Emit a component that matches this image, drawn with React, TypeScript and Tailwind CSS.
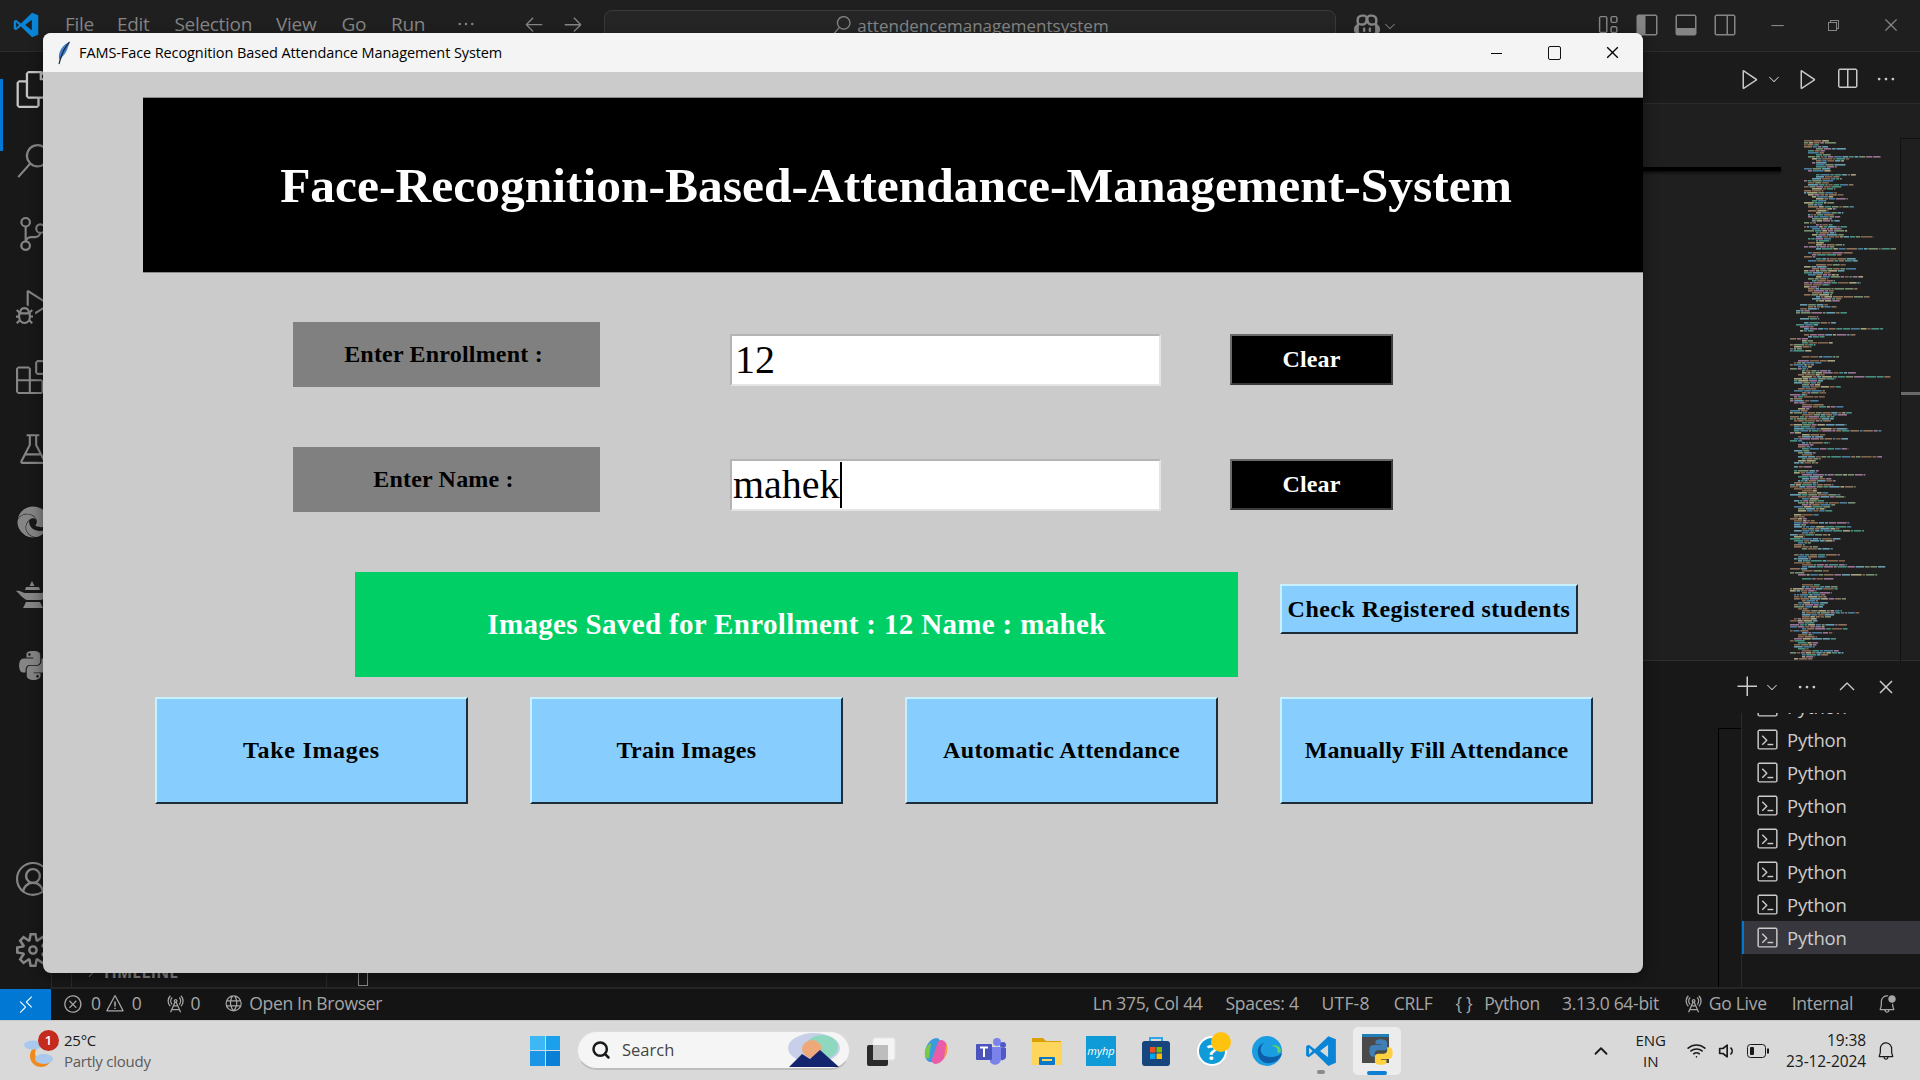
import React from "react";
import {
  VscFiles, VscSearch, VscSourceControl, VscDebugAlt, VscExtensions, VscBeaker, VscAccount, VscSettingsGear,
  VscPlay, VscSplitHorizontal, VscEllipsis, VscAdd, VscChevronDown, VscChevronUp, VscClose, VscTerminal,
  VscLayoutSidebarLeft, VscLayoutPanel, VscLayoutSidebarRightOff, VscLayout, VscRemote, VscError, VscWarning,
  VscRadioTower, VscGlobe, VscBellDot, VscArrowLeft, VscArrowRight, VscChromeMinimize, VscChromeRestore,
  VscChromeClose, VscCopilot, VscChevronRight, VscBell,
} from "react-icons/vsc";
import { FaEdge, FaPython } from "react-icons/fa";
import { FiSearch, FiWifi, FiVolume1, FiChevronUp } from "react-icons/fi";

const VsLogo = ({ size, className }: { size: number; className?: string }) => (
  <svg width={size} height={size} viewBox="0 0 24 24" className={className}>
    <path fill="currentColor" fillRule="evenodd" d="M17.2 1.5 7.6 10.7 3.4 7.6 1.5 8.6v6.8l1.9 1 4.2-3.1 9.6 9.2 5.3-2.2V3.7zM17 7.6v8.8L11.3 12zM3.6 9.6 6 12l-2.4 2.4z" />
  </svg>
);

const Lamp = () => (
  <svg width="36" height="30" viewBox="0 0 36 30">
    <path fill="currentColor" d="M17 2l2.500 5h-5zM11 8h13l1 3H10zM1 12c4-1 6 2 9 2h16c4 0 6-4 9-4-1 5-4 9-9 11H12C8 20 5 15 1 12zM11 23h14l3 6H8z" />
  </svg>
);

function minimap() {
  const palette = ["#4f86a8", "#9a7a5f", "#7d9a78", "#a67ca0", "#6fa8c0", "#b4b08a", "#4c9a8a", "#8a6a52"];
  const rects: React.ReactElement[] = [];
  let seed = 1337;
  const rnd = () => {
    seed = (seed * 16807) % 2147483647;
    return seed / 2147483647;
  };
  for (let y = 0; y < 522; y += 2) {
    if (rnd() < 0.07) continue;
    const base = y < 165 ? 20 : y < 200 ? 12 : 6;
    const indent = base + Math.floor(rnd() * 4) * 4;
    let x = indent;
    const r = rnd();
    const long = r < 0.14 ? 80 : r < 0.55 ? 48 : 22;
    const end = Math.min(112, x + 10 + rnd() * long);
    while (x < end) {
      const w = 2 + rnd() * 9;
      rects.push(<rect key={`${y}-${x}`} x={x} y={y} width={Math.min(w, end - x)} height={1.6} fill={palette[Math.floor(rnd() * palette.length)]} opacity={0.9} />);
      x += w + 0.8;
    }
  }
  return rects;
}

const Feather = () => (
  <svg width="14" height="24" viewBox="0 0 14 24">
    <path d="M12.5 1C7 3 3 8 2 14c-.4 2.500 0 4 1 5.500L5 16c3-2 6-8 7.500-15z" fill="#3f7ec8" />
    <path d="M12.500 1C8 6 5 12 3 19.500L2 23" stroke="#1d2a40" strokeWidth="1.2" fill="none" />
  </svg>
);

const PyColor = ({ size }: { size: number }) => (
  <svg width={size} height={size} viewBox="0 0 24 24">
    <path fill="#3f7fb5" d="M11.900 1C7 1 7.300 3.100 7.300 3.100v2.300h4.700v.7H5.400S2 5.700 2 11s2.900 5 2.900 5h1.800v-2.500s-.1-2.900 2.900-2.900h4.800s2.800 0 2.800-2.700V3.700S17 1 11.900 1z" />
    <path fill="#fdd140" d="M12.100 23c4.900 0 4.600-2.100 4.600-2.100v-2.300H12v-.7h6.600S22 18.300 22 13s-2.900-5-2.900-5h-1.800v2.500s.1 2.900-2.900 2.900H9.600s-2.800 0-2.800 2.700v4.200S7 23 12.100 23z" />
  </svg>
);

const StatusText = ({ children, className }: { children: React.ReactNode; className?: string }) => (
  <span className={`text-[17.5px] leading-none whitespace-nowrap tracking-[-0.3px] ${className ?? ""}`}>{children}</span>
);

const ActIcon = ({ children }: { children: React.ReactNode }) => (
  <div className="flex items-center justify-center text-[#858585] h-[36px]">{children}</div>
);

const TkButton = ({ label, tracking }: { label: string; tracking: string }) => (
  <div className={`w-[313px] h-[107px] bg-[#87ceff] border-2 border-t-[#c8f0ff] border-l-[#c8f0ff] border-r-[#1f2d38] border-b-[#1f2d38] flex items-center justify-center font-bold text-[24px] text-black pb-[2px] ${tracking}`}>
    {label}
  </div>
);

const Row = ({ label, value, caret, mt }: { label: string; value: string; caret?: boolean; mt: string }) => (
  <div className={`flex items-start ml-[250px] ${mt}`}>
    <div className="w-[307px] h-[65px] bg-[#808080] flex items-center justify-center font-bold text-[24px] tracking-[0.2px] text-black pb-[1px] pr-[6px]">{label}</div>
    <div className="ml-[130px] mt-[12px] w-[431px] h-[52px] bg-white border-2 border-t-[#b4b4b4] border-l-[#b4b4b4] border-r-[#e4e4e4] border-b-[#e4e4e4] flex items-center text-[40px] leading-none text-black">
      <span className={caret ? "ml-[1px]" : "ml-[3px]"}>{value}</span>
      {caret && <span className="w-[2px] h-[46px] bg-black" />}
    </div>
    <div className="ml-[69px] mt-[12px] w-[163px] h-[51px] bg-black border-2 border-t-[#6b6b6b] border-l-[#6b6b6b] border-r-[#3a3a3a] border-b-[#3a3a3a] flex items-center justify-center font-bold text-[24px] tracking-[0.1px] text-white pb-[2px]">Clear</div>
  </div>
);

export default function App() {
  return (
    <div className="relative w-[1920px] h-[1080px] overflow-hidden flex flex-col bg-[#1f1f1f] font-['Open_Sans','Noto_Sans',sans-serif]">
      {/* VS Code title bar */}
      <div className="h-[52px] shrink-0 flex items-start bg-[#1f1f1f] border-b border-[#2b2b2b] text-[#858585]">
        <VsLogo size={28} className="text-[#0a84d6] ml-[12px] mt-[11px]" />
        <div className="flex items-center h-[48px] text-[19px] ml-[25px] tracking-[-0.3px]">
          <span>File</span>
          <span className="ml-[23px]">Edit</span>
          <span className="ml-[25px]">Selection</span>
          <span className="ml-[24px]">View</span>
          <span className="ml-[25px]">Go</span>
          <span className="ml-[25px]">Run</span>
          <VscEllipsis size={20} className="ml-[31px]" />
          <VscArrowLeft size={22} className="ml-[47px]" />
          <VscArrowRight size={22} className="ml-[17px]" />
        </div>
        <div className="absolute left-[604px] top-[10px] w-[732px] h-[38px] rounded-[8px] border border-[#3a3a3a] bg-[#252525] flex items-start justify-center pt-[2px] text-[17px]">
          <VscSearch size={20} className="mt-[3px] mr-[6px]" />
          <span>attendencemanagementsystem</span>
        </div>
        <div className="flex-1" />
        <VscCopilot size={26} className="mt-[12px]" />
        <VscChevronDown size={16} className="ml-[2px] mt-[18px]" />
        <VscLayout size={23} className="ml-[198px] mt-[13px]" />
        <VscLayoutSidebarLeft size={24} className="ml-[16px] mt-[13px]" />
        <VscLayoutPanel size={24} className="ml-[15px] mt-[13px]" />
        <VscLayoutSidebarRightOff size={24} className="ml-[15px] mt-[13px]" />
        <VscChromeMinimize size={18} className="ml-[31px] mt-[16px]" />
        <VscChromeRestore size={16} className="ml-[39px] mt-[17px]" />
        <VscChromeClose size={18} className="ml-[41px] mt-[16px] mr-[20px]" />
      </div>

      {/* Main */}
      <div className="flex-1 flex min-h-0">
        {/* Activity bar */}
        <div className="w-[52px] shrink-0 bg-[#181818] flex flex-col relative border-r border-[#2b2b2b]">
          <div className="absolute left-0 top-[27px] w-[3px] h-[72px] bg-[#0078d4]" />
          <div className="flex flex-col items-center pl-[10px] w-[56px] pt-[19px] h-full">
            <ActIcon><VscFiles size={37} className="text-[#c4c4c4]" /></ActIcon>
            <div className="h-[36px]" />
            <ActIcon><VscSearch size={34} /></ActIcon>
            <div className="h-[37px]" />
            <ActIcon><VscSourceControl size={34} /></ActIcon>
            <div className="h-[37px]" />
            <ActIcon><VscDebugAlt size={34} /></ActIcon>
            <div className="h-[34px]" />
            <ActIcon><VscExtensions size={34} /></ActIcon>
            <div className="h-[36px]" />
            <ActIcon><VscBeaker size={34} /></ActIcon>
            <div className="h-[37px]" />
            <ActIcon><FaEdge size={32} /></ActIcon>
            <div className="h-[36px]" />
            <ActIcon><Lamp /></ActIcon>
            <div className="h-[35px]" />
            <ActIcon><FaPython size={33} /></ActIcon>
            <div className="h-[178px]" />
            <ActIcon><VscAccount size={34} /></ActIcon>
            <div className="h-[35px]" />
            <ActIcon><VscSettingsGear size={34} /></ActIcon>
          </div>
        </div>

        {/* Editor and panel */}
        <div className="flex-1 flex flex-col min-w-0">
          <div className="h-[52px] shrink-0 bg-[#1b1b1b] border-b border-[#2b2b2b] flex items-center justify-end text-[#c8c8c8] pt-[2px]">
            <VscPlay size={24} />
            <VscChevronDown size={16} className="ml-[4px]" />
            <VscPlay size={24} className="ml-[14px]" />
            <VscSplitHorizontal size={24} className="ml-[15px]" />
            <VscEllipsis size={22} className="ml-[16px] mr-[23px]" />
          </div>
          <div className="h-[557px] shrink-0 flex relative border-b border-[#2f2f2f]">
            <div className="flex-1 relative">
              <div className="absolute top-[63px] right-[3px] w-[220px] h-[4px] bg-black shadow-[0_2px_3px_rgba(0,0,0,0.6)]" />
            </div>
            <div className="w-[116px] shrink-0 pt-[34px]">
              <svg width="116" height="522" viewBox="0 0 116 522">{minimap()}</svg>
            </div>
            <div className="w-[20px] shrink-0 mt-[34px] border-l border-t border-[#111111] relative h-[523px]">
              <div className="absolute top-[253px] left-0 w-full h-[3px] bg-[#6a6a6a]" />
            </div>
          </div>
          <div className="flex-1 flex flex-col bg-[#181818] min-h-0">
            <div className="h-[52px] shrink-0 flex items-center justify-end text-[#cccccc]">
              <VscAdd size={24} />
              <VscChevronDown size={16} className="ml-[4px]" />
              <VscEllipsis size={22} className="ml-[16px]" />
              <VscChevronUp size={24} className="ml-[17px]" />
              <VscClose size={24} className="ml-[15px] mr-[22px]" />
            </div>
            <div className="flex-1 flex min-h-0">
              <div className="flex-1 relative">
                <div className="absolute left-[31px] top-[251px] text-[#8a8a8a] font-bold text-[16px] leading-none tracking-[0.2px]">
                  <span className="inline-flex items-center"><VscChevronRight size={16} className="mr-[3px]" />TIMELINE</span>
                </div>
                <div className="absolute left-[19px] top-[250px] bottom-0 w-px bg-[#2a2a2a]" />
                <div className="absolute left-[274px] top-[250px] bottom-0 w-px bg-[#2a2a2a]" />
                <div className="absolute left-[306px] top-[256px] w-[10px] h-[17px] border border-[#8a8a8a]" />
                <div className="absolute right-[22px] top-[15px] bottom-0 w-0 border-l border-black" />
                <div className="absolute right-0 top-[15px] w-[22px] h-0 border-t border-black" />
              </div>
              <div className="w-[179px] shrink-0 border-l border-[#2b2b2b] overflow-hidden text-[#cccccc]">
                <div className="mt-[-23px]">
                  {[0, 1, 2, 3, 4, 5, 6, 7].map((i) => (
                    <div key={i} className={`h-[33px] flex items-center text-[18.5px] tracking-[-0.2px] ${i === 7 ? "bg-[#37373d] border-l-[2px] border-[#0078d4] pl-[12px]" : "pl-[14px]"}`}>
                      <VscTerminal size={23} className="mr-[8px]" />
                      <span>Python</span>
                    </div>
                  ))}
                </div>
              </div>
            </div>
            <div className="h-[2px] bg-[#262626] shrink-0" />
          </div>
        </div>
      </div>

      {/* Status bar */}
      <div className="h-[31px] shrink-0 bg-[#141414] flex items-center text-[#a6a6a6] pb-[2px]">
        <div className="w-[51px] h-[31px] mb-[-2px] bg-[#0078d4] flex items-center justify-center text-white"><VscRemote size={20} /></div>
        <VscError size={20} className="ml-[12px]" />
        <StatusText className="ml-[8px]">0</StatusText>
        <VscWarning size={20} className="ml-[4px]" />
        <StatusText className="ml-[7px]">0</StatusText>
        <VscRadioTower size={20} className="ml-[24px]" />
        <StatusText className="ml-[5px]">0</StatusText>
        <VscGlobe size={20} className="ml-[23px]" />
        <StatusText className="ml-[6px]">Open In Browser</StatusText>
        <div className="flex-1" />
        <StatusText>Ln 375, Col 44</StatusText>
        <StatusText className="ml-[23px]">Spaces: 4</StatusText>
        <StatusText className="ml-[23px] tracking-[0.2px]">UTF-8</StatusText>
        <StatusText className="ml-[24px]">CRLF</StatusText>
        <StatusText className="ml-[23px]">{"{ }"}</StatusText>
        <StatusText className="ml-[12px]">Python</StatusText>
        <StatusText className="ml-[22px]">3.13.0 64-bit</StatusText>
        <VscRadioTower size={20} className="ml-[24px]" />
        <StatusText className="ml-[6px]">Go Live</StatusText>
        <StatusText className="ml-[25px]">Internal</StatusText>
        <VscBellDot size={20} className="ml-[24px] mr-[23px]" />
      </div>

      {/* Taskbar */}
      <div className="h-[60px] shrink-0 bg-[#d9d9d9] border-t border-[#c8c8c8] flex items-center text-[#1a1a1a] relative">
        <div className="relative w-[38px] h-[38px] ml-[22px]">
          <svg width="38" height="38" viewBox="0 0 38 38">
            <circle cx="19" cy="24" r="11" fill="#f08a1d" />
            <circle cx="23" cy="21" r="10" fill="#d9d9d9" />
            <ellipse cx="22" cy="27" rx="9" ry="5" fill="#a9c8ee" />
            <ellipse cx="11" cy="13" rx="9" ry="4.500" fill="#a9c8ee" />
          </svg>
          <span className="absolute left-[16px] top-[-2px] w-[21px] h-[21px] rounded-full bg-[#c42b1c] text-white text-[13px] font-semibold flex items-center justify-center leading-none">1</span>
        </div>
        <div className="ml-[4px] flex flex-col text-[15px] leading-[21px] tracking-[-0.25px] w-[106px]">
          <span>25°C</span>
          <span className="text-[#5a5a5a]">Partly cloudy</span>
        </div>
        <div className="ml-[360px] grid grid-cols-2 gap-[1px] w-[30px] h-[30px]">
          <span className="bg-[#3db8f5]" /><span className="bg-[#1ba1ec]" /><span className="bg-[#1b95e6]" /><span className="bg-[#0a7fd6]" />
        </div>
        <div className="ml-[17px] w-[273px] h-[39px] rounded-full bg-[#f5f5f5] border border-b-2 border-[#dcdcdc] border-b-[#bdbdbd] flex items-center relative">
          <FiSearch size={20} className="ml-[13px] stroke-[3px]" />
          <span className="ml-[11px] text-[16.500px] text-[#444444]">Search</span>
          <svg width="56" height="34" viewBox="0 0 56 34" className="absolute right-[7px] top-[1px]">
            <ellipse cx="28" cy="15" rx="26" ry="15" fill="#c7d0e8" />
            <ellipse cx="36" cy="14" rx="16" ry="12" fill="#8fd8c0" />
            <ellipse cx="26" cy="16" rx="10" ry="9" fill="#eea97a" />
            <path d="M3 34 16 21l8 5 10-9 19 17z" fill="#14246e" />
          </svg>
        </div>
        <svg width="30" height="30" viewBox="0 0 30 30" className="ml-[16px]">
          <rect x="7" y="2" width="22" height="22" rx="2" fill="#f4f4f4" stroke="#e4e4e4" />
          <rect x="1" y="9" width="21" height="21" rx="2" fill="#2a2a2a" />
          <rect x="7" y="9" width="15" height="15" fill="#bdbdbd" />
        </svg>
        <svg width="30" height="30" viewBox="0 0 30 30" className="ml-[25px]">
          <path d="M4 20C3 12 8 3 15 2c4 0 5 3 3 8l-5 14c-2 4-8 2-9-4z" fill="#3c9be0" />
          <path d="M4 20c-1-6 2-11 6-13l-2 15c-2 1-3 0-4-2z" fill="#7ac943" />
          <path d="M26 10c1 8-4 17-11 18-4 0-5-3-3-8l5-14c2-4 8-2 9 4z" fill="#e85ca8" />
          <path d="M26 10c1 4 0 9-3 12l2-14c1 0 1 1 1 2z" fill="#f59a3c" />
        </svg>
        <svg width="32" height="32" viewBox="0 0 32 32" className="ml-[24px]">
          <circle cx="22" cy="7" r="4" fill="#7b83eb" />
          <circle cx="28" cy="10" r="3" fill="#5059c9" />
          <path d="M15 12h11v12a6 6 0 0 1-11 3z" fill="#7b83eb" />
          <path d="M26 13h5v9a4 4 0 0 1-5 3z" fill="#5059c9" />
          <rect x="1" y="9" width="16" height="16" rx="1" fill="#4b53bc" />
          <path d="M5 12.500h8M9 12.500v9.500" stroke="#ffffff" strokeWidth="2" fill="none" />
        </svg>
        <svg width="31" height="30" viewBox="0 0 31 30" className="ml-[24px]">
          <path d="M1 2h11l3 3h15v24H1z" fill="#d9a200" />
          <rect x="1" y="6" width="30" height="23" fill="#ffd65c" />
          <rect x="8" y="21" width="16" height="8" rx="1" fill="#0a78c8" />
          <rect x="11" y="23" width="10" height="2" fill="#ffd65c" />
        </svg>
        <div className="ml-[24px] w-[30px] h-[30px] bg-[#0f9bd7] flex items-center justify-center text-white text-[11px] italic leading-none">myhp</div>
        <svg width="30" height="30" viewBox="0 0 30 30" className="ml-[25px]">
          <path d="M9 6V2h12v4" stroke="#2fa8e8" strokeWidth="2" fill="none" />
          <rect x="1" y="5" width="28" height="25" rx="3" fill="#17457e" />
          <rect x="9" y="11" width="5.500" height="5.500" fill="#f25022" />
          <rect x="15.500" y="11" width="5.500" height="5.500" fill="#7fba00" />
          <rect x="9" y="17.500" width="5.500" height="5.500" fill="#00a4ef" />
          <rect x="15.500" y="17.500" width="5.500" height="5.500" fill="#ffb900" />
        </svg>
        <div className="ml-[26px] relative w-[30px] h-[30px] rounded-full bg-[#0f9bd7] border-2 border-white flex items-center justify-center text-white font-bold text-[22px] leading-none">
          ?
          <span className="absolute right-[-6px] top-[-6px] w-[20px] h-[20px] rounded-full bg-[#ffc20e]" />
        </div>
        <svg width="30" height="30" viewBox="0 0 30 30" className="ml-[25px]">
          <circle cx="15" cy="15" r="15" fill="#1b9de2" />
          <path d="M30 17c-2 9-14 13-20 8-6-5-6-16 2-18-5 4-4 11 1 13 6 2 13 1 17-3z" fill="#0c5ea8" />
          <path d="M29 15c0-5-6-7-10-5 5 0 8 3 6 7 2 0 3-1 4-2z" fill="#5fd36a" />
        </svg>
        <VsLogo size={34} className="ml-[22px] text-[#0a84d6]" />
        <div className="ml-[15px] relative w-[48px] h-[48px] rounded-[5px] bg-[#ececec] flex items-center justify-center">
          <div className="w-[27px] h-[29px] bg-[#4a4a4a] border-t-[3px] border-[#1f7fb8] mt-[-4px] mr-[3px]" />
          <span className="absolute left-[14px] top-[11px]"><PyColor size={28} /></span>
          <span className="absolute left-[14px] bottom-0 w-[20px] h-[4px] rounded-full bg-[#0f7fd4]" />
        </div>
        <div className="absolute left-[1317px] bottom-[6px] w-[8px] h-[4px] rounded-full bg-[#8a8a8a]" />
        <div className="flex-1" />
        <FiChevronUp size={22} className="mr-[23px]" />
        <div className="flex flex-col items-center text-[15px] leading-[21px] mr-[21px]">
          <span>ENG</span><span>IN</span>
        </div>
        <FiWifi size={19} />
        <FiVolume1 size={20} className="ml-[12px]" />
        <svg width="22" height="14" viewBox="0 0 22 14" className="ml-[9px]">
          <rect x="0.500" y="0.500" width="18" height="13" rx="3" fill="none" stroke="#1a1a1a" />
          <rect x="3" y="3" width="4" height="8" rx="1" fill="#1a1a1a" />
          <rect x="20" y="4.500" width="2" height="5" fill="#1a1a1a" />
        </svg>
        <div className="w-[97px] flex flex-col items-end text-[15.500px] leading-[21px] tracking-[-0.1px]">
          <span>19:38</span><span>23-12-2024</span>
        </div>
        <VscBell size={20} className="ml-[10px] mr-[24px]" />
      </div>

      {/* Floating tkinter window */}
      <div className="absolute left-[43px] top-[33px] w-[1600px] h-[940px] rounded-[8px] overflow-hidden flex flex-col bg-[#cbcbcb] shadow-[0_4px_14px_rgba(0,0,0,0.45)] font-['Liberation_Serif',serif]">
        <div className="h-[39px] shrink-0 bg-[#f3f4f3] flex items-center text-black font-['Open_Sans',sans-serif]">
          <span className="ml-[14px] flex"><Feather /></span>
          <span className="ml-[8px] text-[14.500px] tracking-[-0.1px]">FAMS-Face Recognition Based Attendance Management System</span>
          <div className="flex-1" />
          <VscChromeMinimize size={16} />
          <svg width="13" height="14" viewBox="0 0 13 14" className="ml-[44px]"><rect x="0.500" y="0.500" width="12" height="13" rx="1.500" fill="none" stroke="#111111" /></svg>
          <VscChromeClose size={17} className="ml-[43px] mr-[22px]" />
        </div>
        <div className="ml-[100px] mt-[25px] h-[176px] bg-black border-t border-b border-[#8a8a8a] flex items-center justify-center text-white font-bold text-[49.500px] leading-none pl-[6px] pt-[2px]">
          Face-Recognition-Based-Attendance-Management-System
        </div>
        <Row label="Enter Enrollment :" value="12" mt="mt-[49px]" />
        <Row label="Enter Name :" value="mahek" caret mt="mt-[60px]" />
        <div className="flex items-start ml-[312px] mt-[60px]">
          <div className="w-[883px] h-[105px] bg-[#00cf65] flex items-center justify-center text-white font-bold text-[29px] tracking-[0.34px]">
            Images Saved for Enrollment : 12 Name : mahek
          </div>
          <div className="ml-[42px] mt-[12px] w-[298px] h-[50px] bg-[#87ceff] border-2 border-t-[#c8f0ff] border-l-[#c8f0ff] border-r-[#1f2d38] border-b-[#1f2d38] flex items-center justify-center font-bold text-[24px] tracking-[0.45px] text-black whitespace-nowrap">
            Check Registered students
          </div>
        </div>
        <div className="flex ml-[112px] mt-[20px] gap-[62px]">
          <TkButton label="Take Images" tracking="tracking-[0.7px]" />
          <TkButton label="Train Images" tracking="tracking-[0.3px]" />
          <TkButton label="Automatic Attendance" tracking="tracking-[0.35px]" />
          <TkButton label="Manually Fill Attendance" tracking="tracking-[0.1px]" />
        </div>
      </div>
    </div>
  );
}
